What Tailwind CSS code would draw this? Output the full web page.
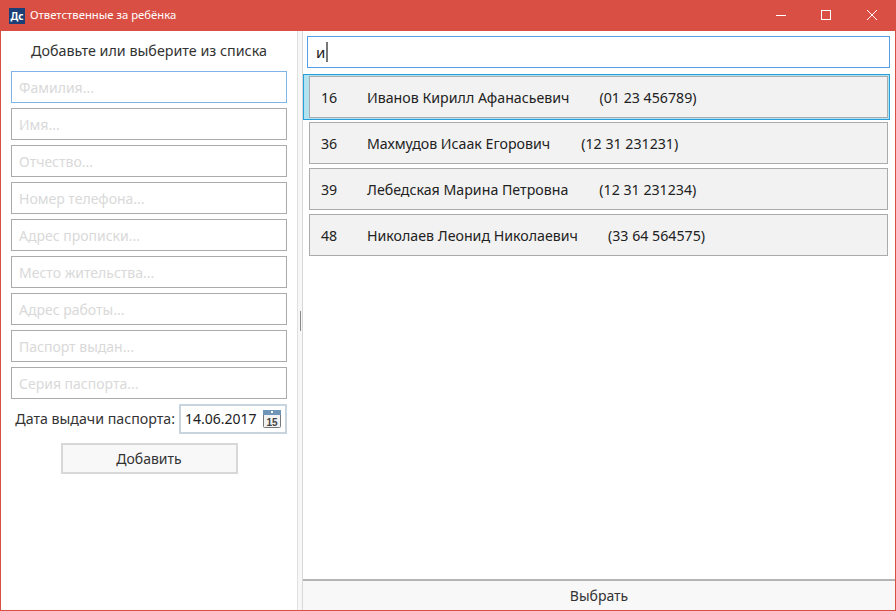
<!DOCTYPE html>
<html lang="ru">
<head>
    <meta charset="UTF-8">
    <title>Ответственные за ребёнка</title>
    <script src="https://cdn.jsdelivr.net/npm/@tailwindcss/browser@4"></script>
</head>
<body class="bg-white">
    <div class="w-[896px] h-[611px] flex flex-col overflow-hidden border border-t-0 border-[#d94f43] font-['Noto_Sans',sans-serif] text-[14px] text-[#222]">
        <!-- заголовок окна -->
        <header class="h-[31px] shrink-0 -mx-px bg-[#d94f43] flex items-center text-white text-[11.3px]">
            <div class="ml-[9px] w-[16px] h-[16px] bg-[#1c3f78] flex items-center justify-center text-[10px] font-bold leading-none">Дс</div>
            <span class="ml-[5px]">Ответственные за ребёнка</span>
            <div class="ml-auto mr-[1px] flex items-center">
                <svg class="w-[46px] h-[31px]" viewBox="0 0 46 31"><path d="M19 15.5h10" stroke="#fff" fill="none"/></svg>
                <svg class="w-[46px] h-[31px]" viewBox="0 0 46 31"><rect x="18.5" y="10.5" width="9" height="9" stroke="#fff" fill="none"/></svg>
                <svg class="w-[46px] h-[31px]" viewBox="0 0 46 31"><path d="M18 10l10 10M28 10l-10 10" stroke="#fff" fill="none"/></svg>
            </div>
        </header>

        <div class="flex flex-1 min-h-0">
            <!-- форма слева -->
            <aside class="w-[296px] shrink-0 px-[10px] flex flex-col">
                <h1 class="h-[40px] flex items-center justify-center text-[14.3px] font-normal text-[#333]">Добавьте или выберите из списка</h1>
                <div class="flex flex-col gap-[5px]">
                    <input class="h-[32px] w-full px-[7px] border border-[#7eb4ea] outline-none placeholder:text-[#d9d9d9]" placeholder="Фамилия...">
                    <input class="h-[32px] w-full px-[7px] border border-[#ababab] outline-none placeholder:text-[#d9d9d9]" placeholder="Имя...">
                    <input class="h-[32px] w-full px-[7px] border border-[#ababab] outline-none placeholder:text-[#d9d9d9]" placeholder="Отчество...">
                    <input class="h-[32px] w-full px-[7px] border border-[#ababab] outline-none placeholder:text-[#d9d9d9]" placeholder="Номер телефона...">
                    <input class="h-[32px] w-full px-[7px] border border-[#ababab] outline-none placeholder:text-[#d9d9d9]" placeholder="Адрес прописки...">
                    <input class="h-[32px] w-full px-[7px] border border-[#ababab] outline-none placeholder:text-[#d9d9d9]" placeholder="Место жительства...">
                    <input class="h-[32px] w-full px-[7px] border border-[#ababab] outline-none placeholder:text-[#d9d9d9]" placeholder="Адрес работы...">
                    <input class="h-[32px] w-full px-[7px] border border-[#ababab] outline-none placeholder:text-[#d9d9d9]" placeholder="Паспорт выдан...">
                    <input class="h-[32px] w-full px-[7px] border border-[#ababab] outline-none placeholder:text-[#d9d9d9]" placeholder="Серия паспорта...">
                </div>
                <div class="mt-[5px] flex items-center justify-end gap-[4px]">
                    <span class="text-[14.2px] text-[#333]">Дата выдачи паспорта:</span>
                    <div class="w-[108px] h-[30px] border-2 border-[#c9d5de] flex items-center justify-between pl-[4px] pr-[3px] text-sm">
                        <span>14.06.2017</span>
                        <svg class="w-[20px] h-[20px]" viewBox="0 0 20 20">
                            <rect x="1.5" y="1.5" width="17" height="17" rx="1" fill="#f2f2f2" stroke="#777"/>
                            <rect x="1" y="1" width="18" height="5" fill="#6f95b8"/>
                            <rect x="9" y="2" width="2" height="2" fill="#fff"/>
                            <text x="10" y="16.5" text-anchor="middle" font-size="10" font-weight="700" fill="#444" font-family="Liberation Sans, sans-serif">15</text>
                        </svg>
                    </div>
                </div>
                <button class="mt-[9px] mx-auto w-[177px] h-[31px] bg-[#f8f8f8] border-2 border-[#d8d8d8] text-sm text-[#333]">Добавить</button>
            </aside>

            <!-- разделитель -->
            <div class="w-[6px] shrink-0 bg-[#f7f7f7] border-l border-r border-[#e0e0e0] border-r-[#d8d8d8] flex items-center justify-center">
                <div class="w-px h-[20px] bg-[#8a8a8a]"></div>
            </div>

            <!-- список справа -->
            <main class="flex-1 min-w-0 flex flex-col">
                <div class="px-[4px] pr-[5px] pt-[5px]">
                    <div class="h-[32px] border border-[#569de5] flex items-center pl-[8px] text-[15px]">
                        <span>и</span><span class="w-[2px] h-[20px] bg-[#777] ml-px"></span>
                    </div>
                </div>
                <div class="flex-1 pt-[6px] text-[14.2px]">
                    <div class="h-[46px] mr-[5px] bg-[#b2e1f0] border border-[#26a0da] pl-[5px] pr-[1px] py-[1px] flex">
                        <div class="flex-1 border border-[#ababab] bg-[#f2f2f2] flex items-center pl-[11px] pt-[1px]">
                            <span class="w-[46px]">16</span><span>Иванов Кирилл Афанасьевич</span><span class="ml-[30px]">(01 23 456789)</span>
                        </div>
                    </div>
                    <div class="mt-[2px] flex flex-col gap-[4px] pl-[6px] pr-[7px]">
                        <div class="h-[42px] border border-[#ababab] bg-[#f2f2f2] flex items-center pl-[11px] pt-[1px]">
                            <span class="w-[46px]">36</span><span>Махмудов Исаак Егорович</span><span class="ml-[31px]">(12 31 231231)</span>
                        </div>
                        <div class="h-[42px] border border-[#ababab] bg-[#f2f2f2] flex items-center pl-[11px] pt-[1px]">
                            <span class="w-[46px]">39</span><span>Лебедская Марина Петровна</span><span class="ml-[31px]">(12 31 231234)</span>
                        </div>
                        <div class="h-[42px] border border-[#ababab] bg-[#f2f2f2] flex items-center pl-[11px] pt-[1px]">
                            <span class="w-[46px]">48</span><span>Николаев Леонид Николаевич</span><span class="ml-[30px]">(33 64 564575)</span>
                        </div>
                    </div>
                </div>
                <button class="h-[31px] shrink-0 bg-[#f8f8f8] border-t-2 border-[#b5b5b5] text-sm text-[#333]">Выбрать</button>
            </main>
        </div>
    </div>
</body>
</html>
